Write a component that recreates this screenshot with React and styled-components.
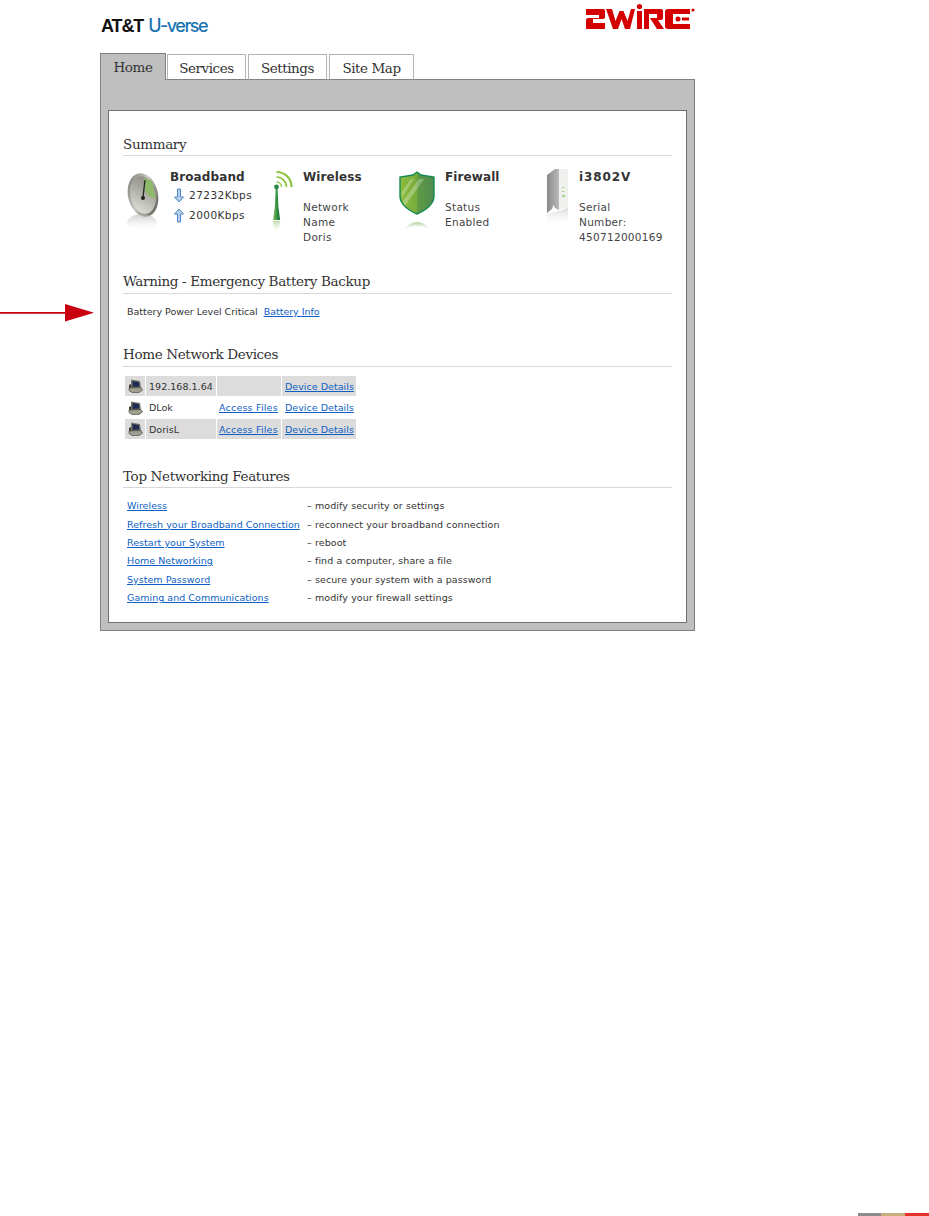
import React from 'react';
import styled, { createGlobalStyle } from 'styled-components';

const Global = createGlobalStyle`
  html, body { margin: 0; padding: 0; background: #fff; }
  body { font-family: "DejaVu Sans", Verdana, sans-serif; font-size: 10.5px; color: #333; }
`;
const Page = styled.div`
  position: relative; width: 929px; height: 1216px; overflow: hidden;
  display: flex; flex-direction: column; padding-left: 100px; box-sizing: border-box;
`;
const Column = styled.div`width: 595px;`;
const Header = styled.header`
  height: 53px; display: flex; justify-content: space-between; align-items: flex-start;
  svg { margin-top: 4px; }
`;
const Brand = styled.div`
  margin: 14px 0 0 1px; font: bold 18px/24px "Liberation Sans", sans-serif; letter-spacing: -1.1px; color: #111;
  span { color: #1a73b0; font: 500 18px/24px Inter, sans-serif; letter-spacing: -1.5px; margin-left: 1px; }
`;
const Tabs = styled.nav`display: flex; align-items: flex-end; height: 27px; gap: 2px; position: relative; z-index: 1;`;
const Tab = styled.div`
  box-sizing: border-box; width: ${p => p.$w}px; height: ${p => p.$active ? 27 : 26}px;
  margin-right: ${p => p.$mr || 0}px;
  display: flex; align-items: center; justify-content: center;
  font: 13.5px "DejaVu Serif", serif; color: #333;
  letter-spacing: -0.45px;
  background: ${p => p.$active ? '#bfbfbf' : '#fff'};
  border: 1px solid ${p => p.$active ? '#808080' : '#b4b4b4'};
  border-bottom: ${p => p.$active ? 'none' : '1px solid #808080'};
  padding-top: 2px;
  padding-bottom: ${p => p.$active ? 2 : 0}px;
`;
const Panel = styled.main`
  box-sizing: border-box; height: 552px; background: #bfbfbf; border: 1px solid #808080; margin-top: -1px;
  padding: 30px 7px 7px;
`;
const Inner = styled.div`
  box-sizing: border-box; height: 100%; background: #fff; border: 1px solid #707070; padding: 0 14px;
`;
const Title = styled.h2`
  margin: ${p => p.$mt}px 0 0; font: normal 13.5px/18px "DejaVu Serif", serif; color: #333; letter-spacing: -0.35px;
  border-bottom: 1px solid #d8d8d8; padding-bottom: ${p => p.$pb || 2}px;
`;
const Summary = styled.div`display: flex; margin-top: 13px; height: 76px;`;
const Item = styled.div`display: flex; width: ${p => p.$w}px; flex: none;`;
const IconBox = styled.div`width: ${p => p.$w}px; flex: none; padding-left: ${p => p.$pl || 0}px; box-sizing: border-box;`;
const ItemTitle = styled.div`font: bold 12px/16px "DejaVu Sans", sans-serif; letter-spacing: ${p => p.$ls || 0.1}px; color: #333; margin-bottom: ${p => p.$mb}px;`;
const ItemText = styled.div`font-size: 10.5px; line-height: 15px; color: #444; letter-spacing: 0.3px;`;
const Rate = styled.div`
  display: flex; align-items: center; gap: 4px; height: 20px; margin-left: 3px;
  font-size: 10.5px; letter-spacing: 0.45px; color: #333;
`;
const Warn = styled.p`margin: 11px 0 0 4px; font-size: 9.5px; line-height: 14px; color: #333; letter-spacing: -0.02px;`;
const A = styled.a`color: #0f5fc4; text-decoration: underline; margin-left: ${p => p.$ml || 0}px; font-size: 9.5px; letter-spacing: -0.02px;`;
const Devices = styled.div`
  display: grid; grid-template-columns: 20px 70px 64px 74px; grid-auto-rows: 20px; row-gap: 1.5px; column-gap: 1px;
  margin: 9px 0 0 2px; width: 232px;
`;
const Cell = styled.div`
  background: ${p => p.$shade ? '#dcdcdc' : 'transparent'}; display: flex; align-items: center;
  padding-left: ${p => p.$pl ?? 3}px; font-size: 9.5px; color: #333; letter-spacing: 0.03px; white-space: nowrap;
  ${A} { letter-spacing: ${p => p.$linkLs ?? 0.03}px; }
`;
const Features = styled.div`
  display: grid; grid-template-columns: 180px 1fr; grid-auto-rows: 18.4px; margin: 8.500px 0 0 4px; align-items: center;
  font-size: 9.5px; white-space: nowrap;
  ${A} { letter-spacing: 0.03px; }
`;
const Desc = styled.span`letter-spacing: 0.09px;`;
const Arrow = styled.svg`position: absolute; left: 0; top: 304px;`;
const Stripe = styled.div`
  position: absolute; right: 0; bottom: 0; display: flex; height: 3px;
`;
const Seg = styled.i`display: block; width: ${p => p.$w}px; background: ${p => p.$c};`;

const WireLogo = () => (
  <svg width="110" height="26" viewBox="0 0 110 26" fill="#d40000" aria-label="2WIRE">
    <path d="M1 5h17a2 2 0 0 1 2 2v6a2 2 0 0 1-2 2H8v4h12v6H1v-9a2 2 0 0 1 2-2h11v-3H1z" />
    <path d="M21 5h6l3.500 12 4-10h4l4 10 3.500-12h4l-5 20h-5l-3.500-10-3.500 10h-5z" />
    <circle cx="54.500" cy="2.600" r="2.600" />
    <rect x="52" y="7" width="5" height="18" />
    <path d="M59 5h17a2 2 0 0 1 2 2v7a2 2 0 0 1-2 2h-3l6 9h-7l-7-11h7v-4h-8v15h-5z" />
    <path d="M83 5h22v5H88v10h17v5H83a3 3 0 0 1-3-3V8a3 3 0 0 1 3-3z" />
    <circle cx="93" cy="15" r="2.500" />
    <rect x="97" y="13.500" width="7" height="3" />
    <circle cx="108" cy="6" r="1.600" />
  </svg>
);
const Gauge = () => (
  <svg width="36" height="66" viewBox="0 0 36 66">
    <defs>
      <linearGradient id="gr" x1="0" y1="0" x2="1" y2="1"><stop offset="0" stopColor="#6f6f68"/><stop offset=".45" stopColor="#c9c9c0"/><stop offset="1" stopColor="#4a4a44"/></linearGradient>
      <linearGradient id="gf" x1="0" y1="0" x2="0" y2="1"><stop offset="0" stopColor="#aaa" stopOpacity=".6"/><stop offset="1" stopColor="#fff" stopOpacity="0"/></linearGradient>
      <linearGradient id="gc" x1=".2" y1="1" x2=".8" y2="0"><stop offset="0" stopColor="#e2e2dc"/><stop offset=".6" stopColor="#a9a9a2"/><stop offset="1" stopColor="#8b8b84"/></linearGradient>
    </defs>
    <g transform="rotate(-12 18 26)">
      <ellipse cx="18" cy="26" rx="15" ry="22" fill="url(#gr)" />
      <ellipse cx="18" cy="26" rx="12.500" ry="19" fill="url(#gc)" />
    </g>
    <path d="M19 9 L27 12 L31 30 L24 27 L19 20 Z" fill="#8fb96a" />
    <path d="M20 11 L18 28" stroke="#222" strokeWidth="1.300" />
    <circle cx="18" cy="29" r="2" fill="#222" />
    <ellipse cx="17" cy="54" rx="15" ry="9" fill="url(#gf)" />
  </svg>
);
const Antenna = () => (
  <svg width="22" height="66" viewBox="0 0 22 66">
    <defs>
      <linearGradient id="ag" x1="0" y1="0" x2="1" y2="0"><stop offset="0" stopColor="#8cc45e"/><stop offset=".6" stopColor="#2b8a42"/><stop offset="1" stopColor="#1e7a3a"/></linearGradient>
      <linearGradient id="af" x1="0" y1="0" x2="0" y2="1"><stop offset="0" stopColor="#7fbf5a" stopOpacity=".55"/><stop offset="1" stopColor="#fff" stopOpacity="0"/></linearGradient>
    </defs>
    <g fill="none" stroke="#8cc63f">
      <path d="M3.500 3c8.500 0 15 6.500 15 15" strokeWidth="2.200" />
      <path d="M3.500 8c5.500 0 10 4.500 10 10" strokeWidth="1.700" />
      <path d="M3.500 13c2.800 0 5 2.200 5 5" strokeWidth="1.300" />
    </g>
    <circle cx="3.500" cy="18" r="2.400" fill="#2a8a4a" />
    <path d="M2.600 20h2l.8 18 1.800 13H0l1.800-13z" fill="url(#ag)" />
    <path d="M0 52h7l-1.500 12h-4z" fill="url(#af)" />
  </svg>
);
const Shield = () => (
  <svg width="37" height="66" viewBox="0 0 37 66">
    <defs>
      <linearGradient id="sg" x1="0" y1="0" x2="1" y2="0"><stop offset="0" stopColor="#8ebd3e"/><stop offset=".5" stopColor="#76ab3c"/><stop offset=".52" stopColor="#5f9a45"/><stop offset="1" stopColor="#4f8a50"/></linearGradient>
      <linearGradient id="sf" x1="0" y1="0" x2="0" y2="1"><stop offset="0" stopColor="#6fa84a" stopOpacity=".55"/><stop offset="1" stopColor="#fff" stopOpacity="0"/></linearGradient>
    </defs>
    <path d="M18 3 L22 6 L35 8 L35 28 Q34 38 18 45 Q2 38 1 28 L1 8 L14 6 Z" fill="url(#sg)" stroke="#168a50" strokeWidth="1.400" />
    <path d="M4 32 L20 10 L25 10 L6 37 Z" fill="#fff" opacity=".28" />
    <path d="M3 23 L12 10 L15 10 L3 28 Z" fill="#fff" opacity=".28" />
    <path d="M3 62 Q18 44 33 62 Q18 52 3 62 Z" fill="url(#sf)" />
  </svg>
);
const Gateway = () => (
  <svg width="22" height="66" viewBox="0 0 22 66">
    <defs>
      <linearGradient id="bg" x1="0" y1="0" x2="1" y2="0"><stop offset="0" stopColor="#8a8a8a"/><stop offset="1" stopColor="#b9b9b9"/></linearGradient>
      <linearGradient id="bf" x1="0" y1="0" x2="0" y2="1"><stop offset="0" stopColor="#bbb" stopOpacity=".55"/><stop offset="1" stopColor="#fff" stopOpacity="0"/></linearGradient>
    </defs>
    <path d="M8 0H21V38L12 41V4z" fill="#f0f0ee" />
    <path d="M0 6 L8 0 H12 V41 L8 39 L6.500 36 L5 40 L0 44 Z" fill="url(#bg)" />
    <g fill="#a8d48a"><rect x="15" y="18" width="2.500" height="1"/><rect x="15" y="22" width="2.500" height="1"/><rect x="15" y="26" width="3" height="2"/></g>
    <path d="M0 45 L12 42 L21 39 V50 L12 57 H0 Z" fill="url(#bf)" />
  </svg>
);
const Down = ({ up }) => (
  <svg width="12" height="15" viewBox="0 0 12 15" style={up ? { transform: 'scaleY(-1)' } : undefined}>
    <path d="M4.500 1h3v8h3L6 14 1.500 9h3z" fill="#b7d0ea" stroke="#4f86c6" strokeWidth="1" />
  </svg>
);
const Pc = () => (
  <svg width="15" height="14" viewBox="0 0 15 14">
    <path d="M3 0.500 L12 2 L13 9 L3 9.500 Z" fill="#77776a" />
    <path d="M4.500 2 L11 3 L11.500 7.500 L4.500 8 Z" fill="#1f2b52" />
    <path d="M1 9 L13 8.500 L14.500 11 L11 13.500 L4 13.500 L1 11.500 Z" fill="#a0a090" stroke="#3d3d36" strokeWidth=".6" />
    <path d="M1 6 L3 5 V9 L1 9 Z" fill="#3d3d36" />
  </svg>
);

const rows = [
  { n: '192.168.1.64', shade: true, files: false },
  { n: 'DLok', shade: false, files: true },
  { n: 'DorisL', shade: true, files: true },
];
const features = [
  ['Wireless', 'modify security or settings'],
  ['Refresh your Broadband Connection', 'reconnect your broadband connection'],
  ['Restart your System', 'reboot'],
  ['Home Networking', 'find a computer, share a file'],
  ['System Password', 'secure your system with a password'],
  ['Gaming and Communications', 'modify your firewall settings'],
];

export default function App() {
  return (
    <Page>
      <Global />
      <Column>
        <Header>
          <Brand>AT&amp;T <span>U-verse</span></Brand>
          <WireLogo />
        </Header>
        <Tabs>
          <Tab $active $w={66} $mr={-1}>Home</Tab>
          <Tab $w={79}>Services</Tab>
          <Tab $w={79}>Settings</Tab>
          <Tab $w={85}>Site Map</Tab>
        </Tabs>
        <Panel>
          <Inner>
            <Title $mt={24}>Summary</Title>
            <Summary>
              <Item $w={150}>
                <IconBox $w={47} $pl={2}><Gauge /></IconBox>
                <div>
                  <ItemTitle $mb={0}>Broadband</ItemTitle>
                  <Rate><Down />27232Kbps</Rate>
                  <Rate><Down up />2000Kbps</Rate>
                </div>
              </Item>
              <Item $w={126}>
                <IconBox $w={30}><Antenna /></IconBox>
                <div>
                  <ItemTitle $mb={15}>Wireless</ItemTitle>
                  <ItemText>Network<br />Name<br />Doris</ItemText>
                </div>
              </Item>
              <Item $w={146}>
                <IconBox $w={46}><Shield /></IconBox>
                <div>
                  <ItemTitle $mb={15}>Firewall</ItemTitle>
                  <ItemText>Status<br />Enabled</ItemText>
                </div>
              </Item>
              <Item $w={120}>
                <IconBox $w={34} $pl={2}><Gateway /></IconBox>
                <div>
                  <ItemTitle $mb={15} $ls={0.9}>i3802V</ItemTitle>
                  <ItemText>Serial<br />Number:<br />450712000169</ItemText>
                </div>
              </Item>
            </Summary>
            <Title $mt={27} $pb={3}>Warning - Emergency Battery Backup</Title>
            <Warn>Battery Power Level Critical <A $ml={3} href="#">Battery Info</A></Warn>
            <Title $mt={26} $pb={3}>Home Network Devices</Title>
            <Devices>
              {rows.map(r => (
                <React.Fragment key={r.n}>
                  <Cell $shade={r.shade} $pl={3}><Pc /></Cell>
                  <Cell $shade={r.shade}>{r.n}</Cell>
                  <Cell $shade={r.shade} $pl={2} $linkLs={0.2}>{r.files && <A href="#">Access Files</A>}</Cell>
                  <Cell $shade={r.shade}><A href="#">Device Details</A></Cell>
                </React.Fragment>
              ))}
            </Devices>
            <Title $mt={28}>Top Networking Features</Title>
            <Features>
              {features.map(([l, d]) => (
                <React.Fragment key={l}>
                  <span><A href="#">{l}</A></span>
                  <Desc>– {d}</Desc>
                </React.Fragment>
              ))}
            </Features>
          </Inner>
        </Panel>
      </Column>
      <Arrow width="94" height="18" viewBox="0 0 94 18">
        <path d="M0 8h65V0l29 8.800-29 8.800V9.700H0z" fill="#c9000f" />
      </Arrow>
      <Stripe>
        <Seg $w={23} $c="#8f8a8c" /><Seg $w={24} $c="#c8ad7c" /><Seg $w={24} $c="#e8302a" />
      </Stripe>
    </Page>
  );
}
